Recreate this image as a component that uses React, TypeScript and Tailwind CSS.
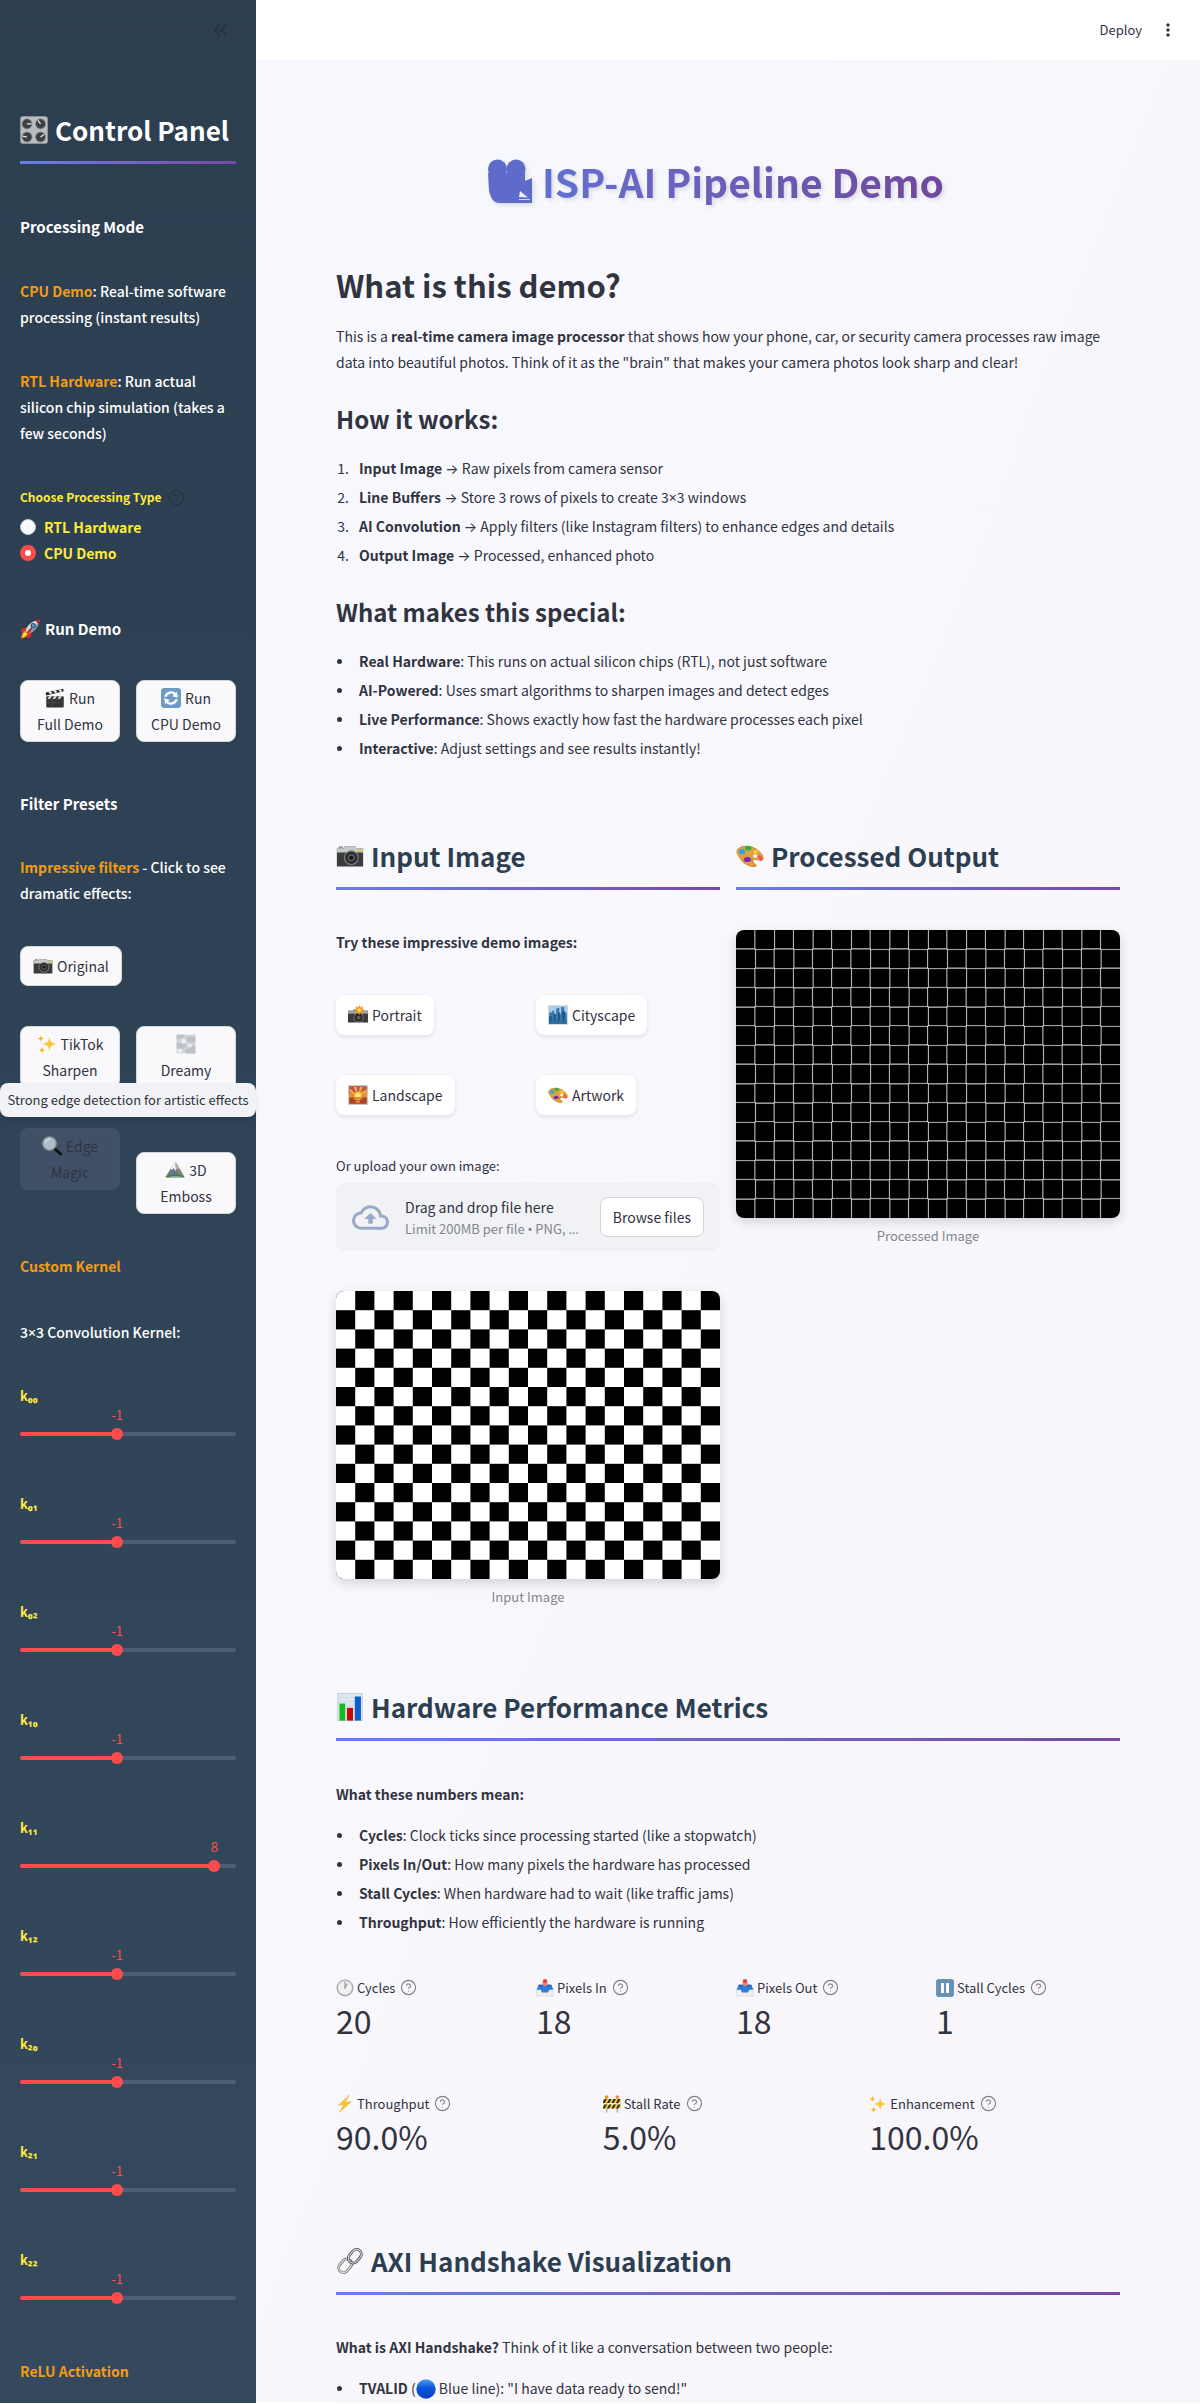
import type { ReactNode } from "react";
import { CircleHelp } from "lucide-react";
import { MdKeyboardDoubleArrowLeft, MdMoreVert, MdOutlineBackup } from "react-icons/md";

const drawings: Record<string, ReactNode> = {
  knobs: (
    <>
      <rect x="0.5" y="0.5" width="31" height="31" rx="3" fill="#b9bdbf" stroke="#8f9497" />
      {[[8, 9], [23.5, 9], [8, 24], [23.5, 24]].map(([x, y]) => (
        <g key={`${x}-${y}`}>
          <circle cx={x} cy={y} r="6.2" fill="#85898c" />
          <circle cx={x} cy={y} r="5.2" fill="#3c4043" />
        </g>
      ))}
      <path d="M8 9h5M23.5 9l-3-4M8 24l-5-1M23.5 24l4-3" stroke="#f2f2f2" strokeWidth="1.4" />
    </>
  ),
  rocket: (
    <>
      <path d="M12 13 3 15l-2 6 8-1zM19 20l-2 9-6 2 1-8z" fill="#d93025" />
      <path d="M9 20C10 11 18 3 31 1c-1 12-8 20-19 22z" fill="#cfd6dc" />
      <path d="M12 23c10-3 18-10 19-22-3 9-11 16-21 20z" fill="#7b8791" />
      <path d="M24 2.500c2-.9 4-1.300 7-1.500-.1 2.800-.6 5-1.500 7z" fill="#c62828" />
      <circle cx="21" cy="10.500" r="4" fill="#37474f" />
      <circle cx="21" cy="10.500" r="2.200" fill="#4fb3f6" />
      <path d="M8 19c-4 1-6 6-6 12 5-1 10-3 11-8z" fill="#f4900c" />
      <path d="M8 21c-2 1-4 4-4 8 4-1 6-3 7-6z" fill="#ffe14d" />
      <path d="m12 22 7-8" stroke="#b71c1c" strokeWidth="2.500" />
    </>
  ),
  clapper: (
    <>
      <rect x="2" y="13" width="28" height="18" rx="1.500" fill="#333" />
      <path d="M1 7 29 1l1 4L2 12z" fill="#222" />
      <path d="m5 6.200 4-.9 3 3.400-4 1zM13 4.500l4-.9 3 3.300-4 1zM21 2.800l4-.9 3 3.300-4 1zM7 13h4l-3 4H4zM15 13h4l-3 4h-4zM23 13h4l-3 4h-4z" fill="#f4f4f4" />
      <path d="M3 19h26M3 23.500h26M12 19v11" stroke="#555" strokeWidth=".9" />
    </>
  ),
  refresh: (
    <>
      <rect x="0.500" y="0.500" width="31" height="31" rx="5" fill="#6d9cc8" stroke="#527fa8" />
      <path d="M7 14a9.500 9.500 0 0 1 16-4M25 18a9.500 9.500 0 0 1-16 4" fill="none" stroke="#fff" strokeWidth="3.600" />
      <path d="M27 15.500 18 13l7.500-7zM5 16.500l9 2.500-7.500 7z" fill="#fff" />
    </>
  ),
  camera: (
    <>
      <path d="M1 7h8l1-2h12l1 2h8v21H1z" fill="#3b3b3b" />
      <path d="M1 7h8l1-2h12l1 2h8v5H1z" fill="#c8ccca" />
      <rect x="25" y="8" width="4" height="3.500" fill="#d8c25a" />
      <rect x="3" y="5" width="5" height="2" fill="#999" />
      <circle cx="17.500" cy="18" r="8.500" fill="#77797a" />
      <circle cx="17.500" cy="18" r="7" fill="#252729" />
      <circle cx="17.500" cy="18" r="4.300" fill="#56595c" />
      <circle cx="17.500" cy="18" r="2.300" fill="#151617" />
    </>
  ),
  flash: (
    <>
      <path d="M0 9h8l2-2h12l2 2h8v19H0z" fill="#3b3b3b" />
      <path d="M0 9h32v5H0z" fill="#9da19f" />
      <circle cx="17" cy="20" r="8" fill="#777a7c" />
      <circle cx="17" cy="20" r="6.500" fill="#25282a" />
      <circle cx="17" cy="20" r="3.200" fill="#595d60" />
      <path d="m18 0 2 4 4-2-1 4 4 2-4 2 1 4-4-2-2 4-2-4-4 2 1-4-4-2 4-2-1-4 4 2z" fill="#f7941d" />
      <circle cx="18" cy="8" r="3" fill="#ffe36b" />
    </>
  ),
  sparkles: (
    <>
      <path d="M20 4c1 8 2.500 10 11 12-8.500 2-10 4-11 12-1-8-2.500-10-11-12 8.500-2 10-4 11-12z" fill="#fcc934" />
      <path d="M6 1c.5 4 1.500 5 5 6-3.500 1-4.500 2-5 6-.5-4-1.500-5-5-6 3.500-1 4.500-2 5-6zM8 20c.5 4 1.500 5 5 6-3.500 1-4.500 2-5 6-.5-4-1.500-5-5-6 3.500-1 4.500-2 5-6z" fill="#f9b826" />
    </>
  ),
  fog: (
    <>
      <rect x="1" y="1" width="30" height="30" fill="#d2d4da" />
      <path d="M1 1h12c2 4-2 6-6 5-2 3-4 3-6 2zM18 5c5-3 8 1 13-1v9c-4 2-6-1-9 0-4 0-6-5-4-8zM1 14c5-2 6 3 11 2s5 5 1 7-9-2-12 1zM15 25c4-4 8-1 10-4s4-2 6-1v11H17c-3-1-4-4-2-6z" fill="#bdc0c9" />
      <path d="M12 8c4 0 5 4 3 6s-6 1-6-2 1-4 3-4zM21 16c3-1 5 1 4 3s-6 2-6 0 1-3 2-3zM4 25c3-2 7 0 6 3s-6 2-7 0z" fill="#eceef1" />
    </>
  ),
  magnifier: (
    <>
      <path d="m20 20 10 9" stroke="#111" strokeWidth="4.500" strokeLinecap="round" />
      <circle cx="12" cy="12" r="10.800" fill="#aebdca" stroke="#8a8f94" strokeWidth="2" />
      <path d="M5 11a8 8 0 0 1 8-6" fill="none" stroke="#dce6ee" strokeWidth="2" />
    </>
  ),
  mountain: (
    <>
      <path d="M1 27 14 6c2-3 4-2 5 0l12 21z" fill="#62788c" />
      <path d="M9 14 14 6c2-3 4-2 5 0l5 9-4-2-3 4-3-4-3 3z" fill="#f2f5f7" />
      <path d="m16 4 3 2 12 21H19l2-8-4-5z" fill="#9b8a63" opacity=".65" />
      <path d="M0 28c5-6 10-3 14-5 5-1 12 0 18 5z" fill="#517f32" />
      <path d="M4 28c8-3 18-2 26 0z" fill="#8eb8d0" />
    </>
  ),
  city: (
    <>
      <rect x="0.500" y="1" width="31" height="30" fill="#a9cfed" stroke="#c9d5df" />
      <path d="M2 12h4v-3h4v6h3V6l5-2v10h3V3h5v9h4v18H2z" fill="#3c78a8" />
      <path d="M2 18h4v12H2zM9 14h3v16H9zM16 12h3v18h-3zM23 10h4v20h-4z" fill="#1f5583" />
      <path d="M2 25h28v5H2z" fill="#2d6c9e" />
    </>
  ),
  sunset: (
    <>
      <rect x="1" y="1" width="30" height="30" fill="#ef8a2b" stroke="#c5ccd2" strokeWidth="2" />
      <path d="M2 2h28v7L2 13z" fill="#b8574a" />
      <path d="M16 18 3 5v6zM16 18 9 3h5zM16 18l3-15h5zM16 18 29 6v6z" fill="#f5a64a" />
      <circle cx="16" cy="17" r="6" fill="#ffd43b" />
      <circle cx="16" cy="17" r="3" fill="#fff3a0" />
      <path d="M2 20h28v10H2z" fill="#a9452b" />
      <path d="M8 21h16l-5 3h-6zM12 25h8l-2 3h-4z" fill="#f7a531" />
    </>
  ),
  palette: (
    <g transform="translate(0 2)">
      <path d="M2 6C8 0 20 2 26 8c6 5 7 10 4 11-3 2-8-2-10 0-2 3 6 5 3 7-5 2-14-2-18-8S-1 9 2 6z" fill="#c98a2d" />
      <path d="M3 6C9 1 19 3 25 8c5 4 7 9 4 10-3 1-8-2-11 0-2 3 5 6 3 7-5 1-12-2-16-8S0 9 3 6z" fill="#e0a240" />
      <ellipse cx="22" cy="14" rx="2.500" ry="2" fill="#f8f7fc" />
      <ellipse cx="14" cy="5" rx="3.600" ry="2.600" fill="#35b13a" />
      <ellipse cx="7" cy="9" rx="3.600" ry="3" fill="#2fa4dc" />
      <ellipse cx="22.500" cy="9" rx="2.800" ry="2" fill="#f3d42f" />
      <ellipse cx="13" cy="18" rx="4.200" ry="2.900" fill="#8428b0" />
      <ellipse cx="27.500" cy="16" rx="2" ry="3.500" fill="#ee5a4a" transform="rotate(-35 27.500 16)" />
    </g>
  ),
  chart: (
    <>
      <rect x="2" y="0.500" width="28" height="31" fill="#dde7ef" stroke="#c3ced6" />
      <path d="M3 5h26M3 10h26M3 15h26M3 20h26M3 25h26" stroke="#c9d8e3" strokeWidth=".7" />
      <rect x="4" y="12" width="6.500" height="19.500" fill="#0dbf1c" />
      <rect x="12.500" y="17" width="7" height="14.500" fill="#c4080b" />
      <rect x="21.500" y="4" width="7" height="27.500" fill="#0d5fcb" />
    </>
  ),
  clock: (
    <>
      <circle cx="16" cy="16" r="15" fill="#a9abad" />
      <circle cx="16" cy="15.500" r="12.500" fill="#f1f1f0" />
      <path d="M16 16V5.500M16 16l4-7" stroke="#777" strokeWidth="1.600" strokeLinecap="round" />
    </>
  ),
  tray: (
    <>
      <path d="M1 19h30v11.500H1z" fill="#eeeeec" stroke="#d5d5d2" strokeWidth=".8" />
      <path d="M5 10h22l4 9h-7l-3 5H11l-3-5H1z" fill="#2f7dd6" />
      <path d="M5 10h22l1 3H4z" fill="#1b5eb4" />
      <circle cx="16" cy="4" r="4" fill="#ef4236" />
      <path d="M11 7h10l-2.500 6h-5z" fill="#f37f76" />
    </>
  ),
  pause: (
    <>
      <rect x="0.500" y="0.500" width="31" height="31" rx="5" fill="#6690b5" stroke="#4f7899" />
      <path d="M9 7h5v18H9zM18 7h5v18h-5z" fill="#fff" />
    </>
  ),
  bolt: <path d="M24 0 4 18l10-1L6 31l21-19-11 1z" fill="#fcc02e" stroke="#f1a72c" strokeWidth=".8" />,
  barrier: (
    <>
      <path d="M5 5h3v26H5zM24 5h3v26h-3z" fill="#b2b6b8" />
      <circle cx="6.500" cy="3.500" r="3.200" fill="#f08a24" />
      <circle cx="25.500" cy="3.500" r="3.200" fill="#f08a24" />
      <path d="M0 7h32v7H0zM0 17h32v7H0z" fill="#f7cf2d" />
      <path d="m3 7 4 0-4 7H-1zM11 7h4l-4 7H7zM19 7h4l-4 7h-4zM27 7h4l-4 7h-4zM3 17h4l-4 7h-4zM11 17h4l-4 7H7zM19 17h4l-4 7h-4zM27 17h4l-4 7h-4z" fill="#262626" />
    </>
  ),
  link: (
    <g fill="none">
      <rect x="-5.500" y="-8.500" width="11" height="17" rx="5.500" transform="translate(10.500 21.500) rotate(40)" stroke="#77706c" strokeWidth="3.200" />
      <rect x="-5.500" y="-8.500" width="11" height="17" rx="5.500" transform="translate(10.500 21.500) rotate(40)" stroke="#e3e3e2" strokeWidth="1.400" />
      <rect x="-5.500" y="-8.500" width="11" height="17" rx="5.500" transform="translate(21.500 10.500) rotate(40)" stroke="#544c49" strokeWidth="3.200" />
      <rect x="-5.500" y="-8.500" width="11" height="17" rx="5.500" transform="translate(21.500 10.500) rotate(40)" stroke="#c3d6e6" strokeWidth="1.400" />
    </g>
  ),
  blue: (
    <>
      <defs>
        <linearGradient id="ball" x1="0" y1="0" x2="0" y2="1">
          <stop offset="0" stopColor="#4f9bf5" />
          <stop offset=".45" stopColor="#0a55d6" />
          <stop offset="1" stopColor="#0b3fc0" />
        </linearGradient>
      </defs>
      <circle cx="16" cy="16" r="15.500" fill="url(#ball)" />
    </>
  ),
};

const emojiSizes = {
  sm: "h-[18px] w-[18px]",
  md: "h-5 w-5",
  lg: "h-7 w-7",
};

function Emoji({ name, size = "md" }: { name: string; size?: keyof typeof emojiSizes }) {
  return (
    <svg viewBox="0 0 32 32" aria-hidden="true" className={`inline-block shrink-0 ${emojiSizes[size]}`}>
      {drawings[name]}
    </svg>
  );
}

function Sym({ children }: { children: ReactNode }) {
  return <span className="font-['Noto_Sans','Inter',sans-serif]">{children}</span>;
}

function SectionHeading({ icon, children, dark = false }: { icon: string; children: ReactNode; dark?: boolean }) {
  return (
    <div>
      <h2
        className={`flex items-center gap-[7px] whitespace-nowrap pb-[14px] text-[26px] leading-[34px] font-bold ${
          dark ? "text-white" : "text-[#2c3e50]"
        }`}
      >
        <Emoji name={icon} size="lg" />
        {children}
      </h2>
      <div className="h-[3px] bg-linear-to-r from-[#667eea] to-[#764ba2]" />
    </div>
  );
}

function List({ ordered = false, items }: { ordered?: boolean; items: [ReactNode, ReactNode][] }) {
  if (ordered) {
    return (
      <ol className="list-decimal pl-4 text-[14px] leading-[29px]">
        {items.map(([term, rest], i) => (
          <li key={i} className="pl-[7px]">
            <strong className="font-bold">{term}</strong>
            {rest}
          </li>
        ))}
      </ol>
    );
  }
  return (
    <ul className="list-none text-[14px] leading-[29px]">
      {items.map(([term, rest], i) => (
        <li key={i} className="flex items-center">
          <span className="mr-[17px] ml-px h-[5px] w-[5px] shrink-0 rounded-full bg-[#31333f]" />
          <span>
            <strong className="font-bold">{term}</strong>
            {rest}
          </span>
        </li>
      ))}
    </ul>
  );
}

function SideButton({ icon, lines, active = false }: { icon: string; lines: string[]; active?: boolean }) {
  return (
    <button
      type="button"
      className={`w-full rounded-lg border py-1 text-[14px] leading-[26px] ${
        active
          ? "border-[#43546a] bg-[#405167] text-[#31333f]"
          : "border-[#d5d6da] bg-[#f9f9fc] text-[#31333f]"
      }`}
    >
      <span className="flex h-[26px] items-center justify-center gap-1">
        <Emoji name={icon} />
        {lines[0]}
      </span>
      {lines.slice(1).map((l) => (
        <span key={l} className="block">
          {l}
        </span>
      ))}
    </button>
  );
}

function KernelSlider({ label, value }: { label: string; value: number }) {
  const pct = ((value + 10) / 20) * 100;
  const id = `slider-${label}`;
  return (
    <div>
      <label htmlFor={id} className="block text-[13px] leading-5 font-bold text-[#ffeb3b]">
        {label}
      </label>
      <div className="relative h-5">
        <output
          htmlFor={id}
          className="absolute -translate-x-1/2 text-[13px] leading-[18px] font-normal text-[#ff4b4b]"
          style={{ left: `${pct}%` }}
        >
          {value}
        </output>
      </div>
      <div className="relative mt-0.5 flex h-3 items-center">
        <div
          className="h-1 w-full rounded-full"
          style={{ background: `linear-gradient(to right, #ff4b4b ${pct}%, #4d5f76 ${pct}%)` }}
        />
        <input
          id={id}
          type="range"
          min={-10}
          max={10}
          defaultValue={value}
          className="absolute inset-y-0 -left-1.5 h-3 w-[calc(100%+12px)] cursor-pointer appearance-none bg-transparent [&::-webkit-slider-thumb]:h-3 [&::-webkit-slider-thumb]:w-3 [&::-webkit-slider-thumb]:appearance-none [&::-webkit-slider-thumb]:rounded-full [&::-webkit-slider-thumb]:bg-[#ff4b4b]"
        />
      </div>
    </div>
  );
}

function Sidebar() {
  return (
    <aside className="w-64 shrink-0 bg-linear-to-b from-[#2c3e50] to-[#34495e] px-5 text-[14px] leading-[26px] font-medium text-white">
      <div className="flex h-[60px] items-center justify-end pr-1">
        <button type="button" aria-label="Collapse sidebar" className="text-[#263242]">
          <MdKeyboardDoubleArrowLeft size={24} />
        </button>
      </div>
      <div className="mt-[53px]">
        <SectionHeading icon="knobs" dark>
          Control Panel
        </SectionHeading>
      </div>

      <h3 className="mt-[50px] text-[15px] leading-[26px] font-bold">Processing Mode</h3>
      <p className="mt-[38px]">
        <strong className="font-bold text-[#f39c12]">CPU Demo</strong>: Real-time software processing (instant results)
      </p>
      <p className="mt-[38px]">
        <strong className="font-bold text-[#f39c12]">RTL Hardware</strong>: Run actual silicon chip simulation (takes a few
        seconds)
      </p>

      <fieldset className="mt-[41px]">
        <legend className="flex items-center gap-1.5 text-[12px] leading-5 font-bold text-[#ffeb3b]">
          Choose Processing Type
          <CircleHelp size={17} strokeWidth={1.8} className="text-[#263242]" />
        </legend>
        <div className="mt-[7px] font-bold text-[#ffeb3b]">
          <label className="flex items-center gap-2">
            <input
              type="radio"
              name="mode"
              className="h-4 w-4 appearance-none rounded-full border border-[#c3c8d0] bg-[#f8f9fc] checked:border-5 checked:border-[#ff4b4b] checked:bg-white"
            />
            RTL Hardware
          </label>
          <label className="flex items-center gap-2">
            <input
              type="radio"
              name="mode"
              defaultChecked
              className="h-4 w-4 appearance-none rounded-full border border-[#c3c8d0] bg-[#f8f9fc] checked:border-5 checked:border-[#ff4b4b] checked:bg-white"
            />
            CPU Demo
          </label>
        </div>
      </fieldset>

      <h3 className="mt-[50px] flex items-center gap-[5px] text-[15px] leading-[26px] font-bold">
        <Emoji name="rocket" />
        Run Demo
      </h3>
      <div className="mt-[38px] grid grid-cols-2 gap-4 font-normal">
        <SideButton icon="clapper" lines={["Run", "Full Demo"]} />
        <SideButton icon="refresh" lines={["Run", "CPU Demo"]} />
      </div>

      <h3 className="mt-[49px] text-[15px] leading-[26px] font-bold">Filter Presets</h3>
      <p className="mt-[37px]">
        <strong className="font-bold text-[#f39c12]">Impressive filters</strong> - Click to see dramatic effects:
      </p>
      <button
        type="button"
        className="mt-10 flex h-10 items-center gap-1 rounded-lg border border-[#d5d6da] bg-[#f9f9fc] px-3 font-normal text-[#31333f]"
      >
        <Emoji name="camera" />
        Original
      </button>
      <div className="mt-10 grid grid-cols-2 items-start gap-4 font-normal">
        <div className="flex flex-col gap-10">
          <SideButton icon="sparkles" lines={["TikTok", "Sharpen"]} />
          <div className="relative">
            <SideButton icon="magnifier" lines={["Edge", "Magic"]} active />
            <div
              role="tooltip"
              className="absolute -top-[45px] -left-5 z-10 w-64 rounded-lg bg-[#f0f2f6] py-[7px] text-center text-[13px] leading-5 whitespace-nowrap text-[#31333f] shadow-md"
            >
              Strong edge detection for artistic effects
            </div>
          </div>
        </div>
        <div className="flex flex-col gap-[38px]">
          <SideButton icon="fog" lines={["", "Dreamy", "Blur"]} />
          <SideButton icon="mountain" lines={["3D", "Emboss"]} />
        </div>
      </div>

      <p className="mt-[39px] font-bold text-[#f39c12]">Custom Kernel</p>
      <p className="mt-10">
        3<Sym>×</Sym>3 Convolution Kernel:
      </p>
      <div className="mt-10 flex flex-col gap-[54px]">
        <KernelSlider label="k₀₀" value={-1} />
        <KernelSlider label="k₀₁" value={-1} />
        <KernelSlider label="k₀₂" value={-1} />
        <KernelSlider label="k₁₀" value={-1} />
        <KernelSlider label="k₁₁" value={8} />
        <KernelSlider label="k₁₂" value={-1} />
        <KernelSlider label="k₂₀" value={-1} />
        <KernelSlider label="k₂₁" value={-1} />
        <KernelSlider label="k₂₂" value={-1} />
      </div>
      <p className="mt-[54px] font-bold text-[#f39c12]">ReLU Activation</p>
    </aside>
  );
}

function DemoButton({ icon, children }: { icon: string; children: ReactNode }) {
  return (
    <div>
      <button
        type="button"
        className="flex h-10 items-center gap-1 rounded-lg bg-white px-3 text-[14px] text-[#31333f] shadow-[0_2px_4px_rgba(0,0,0,0.1)]"
      >
        <Emoji name={icon} />
        {children}
      </button>
    </div>
  );
}

const COLS = 20;
const ROWS = 15;
const CELL = 32;
const whiteCells = Array.from({ length: COLS * ROWS }, (_, i) => [i % COLS, Math.floor(i / COLS)]).filter(
  ([c, r]) => (c + r) % 2 === 0,
);

function Checkerboard() {
  return (
    <svg viewBox="0 0 640 480" role="img" aria-label="Checkerboard" className="block w-full bg-black">
      {whiteCells.map(([c, r]) => (
        <rect key={`${c}-${r}`} x={c * CELL} y={r * CELL} width={CELL} height={CELL} fill="#fff" />
      ))}
    </svg>
  );
}

function EdgeMap() {
  const d = whiteCells
    .map(([c, r]) => {
      const x = c * CELL;
      const y = r * CELL;
      return (
        (c > 0 ? `M${x} ${y}h1v32h-1z` : "") +
        (c < COLS - 1 ? `M${x + 31} ${y}h1v32h-1z` : "") +
        (r > 0 ? `M${x} ${y}h32v1h-32z` : "") +
        (r < ROWS - 1 ? `M${x} ${y + 31}h32v1h-32z` : "")
      );
    })
    .join("");
  return (
    <svg viewBox="0 0 640 480" role="img" aria-label="Detected edges" className="block w-full bg-black">
      <path d={d} fill="#fff" stroke="#fff" strokeWidth="0.3" />
    </svg>
  );
}

function Picture({ caption, children }: { caption: string; children: ReactNode }) {
  return (
    <figure className="mt-10">
      <div className="overflow-hidden rounded-lg shadow-[0_4px_12px_rgba(0,0,0,0.15)]">{children}</div>
      <figcaption className="mt-2 text-center text-[13px] leading-5 text-[#84858c]">{caption}</figcaption>
    </figure>
  );
}

function Metric({ icon, label, value }: { icon: string; label: string; value: string }) {
  return (
    <div>
      <div className="flex h-6 items-center text-[13px]">
        <Emoji name={icon} size="sm" />
        <span className="ml-[3px]">{label}</span>
        <CircleHelp size={17} strokeWidth={1.6} className="mb-0.5 ml-[5px] text-[#7d7f88]" />
      </div>
      <div className="text-[32px] leading-10">{value}</div>
    </div>
  );
}

export default function App() {
  return (
    <div className="flex overflow-x-hidden bg-white font-['Noto_Sans_CJK_SC','Noto_Sans',sans-serif] text-[14px] text-[#31333f]">
      <Sidebar />
      <div className="flex min-w-0 flex-1 flex-col">
        <header className="flex h-[60px] items-center justify-end gap-4 bg-white pr-[22px]">
          <button type="button" className="text-[13px]">
            Deploy
          </button>
          <button type="button" aria-label="Menu">
            <MdMoreVert size={20} />
          </button>
        </header>
        <main className="flex-1 bg-linear-to-br from-[#f7f9ff] via-[#f8f7fc] to-[#f8f5fa] px-20">
          <h1 className="flex items-center justify-center gap-[10px] pt-[97px] pr-6 text-[39px] leading-[48px] font-bold">
            <svg viewBox="0 0 44 44" aria-hidden="true" className="h-11 w-11 drop-shadow-[2px_2px_2px_rgba(0,0,0,0.12)]" fill="#5f6bc8">
              <circle cx="9.500" cy="10" r="9.500" />
              <circle cx="28" cy="10" r="9.500" />
              <path d="M0 14h37v8l7-3v25H12C4 44 3 38 1 32z" />
              <path d="m31 38 1-6 8 6.500z" fill="#eceefa" />
              <path d="M31 40.500h11" stroke="#eceefa" strokeWidth=".8" />
            </svg>
            <span className="bg-linear-to-r from-[#6270d0] to-[#6f489d] bg-clip-text text-transparent drop-shadow-[2px_2px_2px_rgba(0,0,0,0.12)]">
              ISP-AI Pipeline Demo
            </span>
          </h1>

          <h2 className="mt-[58px] text-[31px] leading-[44px] font-bold">What is this demo?</h2>
          <p className="mt-4 leading-[26px]">
            This is a <strong className="font-bold">real-time camera image processor</strong> that shows how your phone, car, or
            security camera processes raw image data into beautiful photos. Think of it as the "brain" that makes your camera
            photos look sharp and clear!
          </p>

          <h3 className="mt-[27px] mb-[18px] text-[24px] leading-[34px] font-bold">How it works:</h3>
          <List
            ordered
            items={[
              ["Input Image", <> <Sym>→</Sym> Raw pixels from camera sensor</>],
              ["Line Buffers", <> <Sym>→</Sym> Store 3 rows of pixels to create 3<Sym>×</Sym>3 windows</>],
              ["AI Convolution", <> <Sym>→</Sym> Apply filters (like Instagram filters) to enhance edges and details</>],
              ["Output Image", <> <Sym>→</Sym> Processed, enhanced photo</>],
            ]}
          />

          <h3 className="mt-[25px] mb-[18px] text-[24px] leading-[34px] font-bold">What makes this special:</h3>
          <List
            items={[
              ["Real Hardware", ": This runs on actual silicon chips (RTL), not just software"],
              ["AI-Powered", ": Uses smart algorithms to sharpen images and detect edges"],
              ["Live Performance", ": Shows exactly how fast the hardware processes each pixel"],
              ["Interactive", ": Adjust settings and see results instantly!"],
            ]}
          />

          <div className="mt-[76px] grid grid-cols-2 gap-4">
            <section>
              <SectionHeading icon="camera">Input Image</SectionHeading>
              <p className="mt-[39px] leading-[26px] font-bold">Try these impressive demo images:</p>
              <div className="mt-10 grid grid-cols-2 gap-x-4 gap-y-10">
                <DemoButton icon="flash">Portrait</DemoButton>
                <DemoButton icon="city">Cityscape</DemoButton>
                <DemoButton icon="sunset">Landscape</DemoButton>
                <DemoButton icon="palette">Artwork</DemoButton>
              </div>
              <p className="mt-[41px] text-[13px] leading-5">Or upload your own image:</p>
              <div className="mt-[7px] flex h-[68px] items-center rounded-lg bg-[#f0f2f6] px-4">
                <MdOutlineBackup size={37} className="shrink-0 text-[#9aa9c7]" />
                <div className="ml-4 min-w-0 flex-1">
                  <div className="leading-6">Drag and drop file here</div>
                  <div className="truncate text-[13px] leading-5 text-[#84858c]">
                    Limit 200MB per file <Sym>•</Sym> PNG, <Sym>…</Sym>
                  </div>
                </div>
                <button
                  type="button"
                  className="ml-4 h-10 shrink-0 rounded-lg border border-[#d6d6d9] bg-white px-3 whitespace-nowrap"
                >
                  Browse files
                </button>
              </div>
              <Picture caption="Input Image">
                <Checkerboard />
              </Picture>
            </section>
            <section>
              <SectionHeading icon="palette">Processed Output</SectionHeading>
              <Picture caption="Processed Image">
                <EdgeMap />
              </Picture>
            </section>
          </div>

          <section className="mt-[83px]">
            <SectionHeading icon="chart">Hardware Performance Metrics</SectionHeading>
            <p className="mt-10 mb-[14px] leading-[26px] font-bold">What these numbers mean:</p>
            <List
              items={[
                ["Cycles", ": Clock ticks since processing started (like a stopwatch)"],
                ["Pixels In/Out", ": How many pixels the hardware has processed"],
                ["Stall Cycles", ": When hardware had to wait (like traffic jams)"],
                ["Throughput", ": How efficiently the hardware is running"],
              ]}
            />
            <div className="mt-[39px] grid grid-cols-4 gap-4">
              <Metric icon="clock" label="Cycles" value="20" />
              <Metric icon="tray" label="Pixels In" value="18" />
              <Metric icon="tray" label="Pixels Out" value="18" />
              <Metric icon="pause" label="Stall Cycles" value="1" />
            </div>
            <div className="mt-[52px] grid grid-cols-3 gap-4">
              <Metric icon="bolt" label="Throughput" value="90.0%" />
              <Metric icon="barrier" label="Stall Rate" value="5.0%" />
              <Metric icon="sparkles" label="Enhancement" value="100.0%" />
            </div>
          </section>

          <section className="mt-[88px]">
            <SectionHeading icon="link">AXI Handshake Visualization</SectionHeading>
            <p className="mt-[39px] mb-[14px] leading-[26px]">
              <strong className="font-bold">What is AXI Handshake?</strong> Think of it like a conversation between two people:
            </p>
            <List
              items={[
                [
                  "TVALID",
                  <span className="inline-flex items-center whitespace-pre">
                    {" ("}
                    <Emoji name="blue" />
                    {' Blue line): "I have data ready to send!"'}
                  </span>,
                ],
              ]}
            />
          </section>
        </main>
      </div>
    </div>
  );
}
